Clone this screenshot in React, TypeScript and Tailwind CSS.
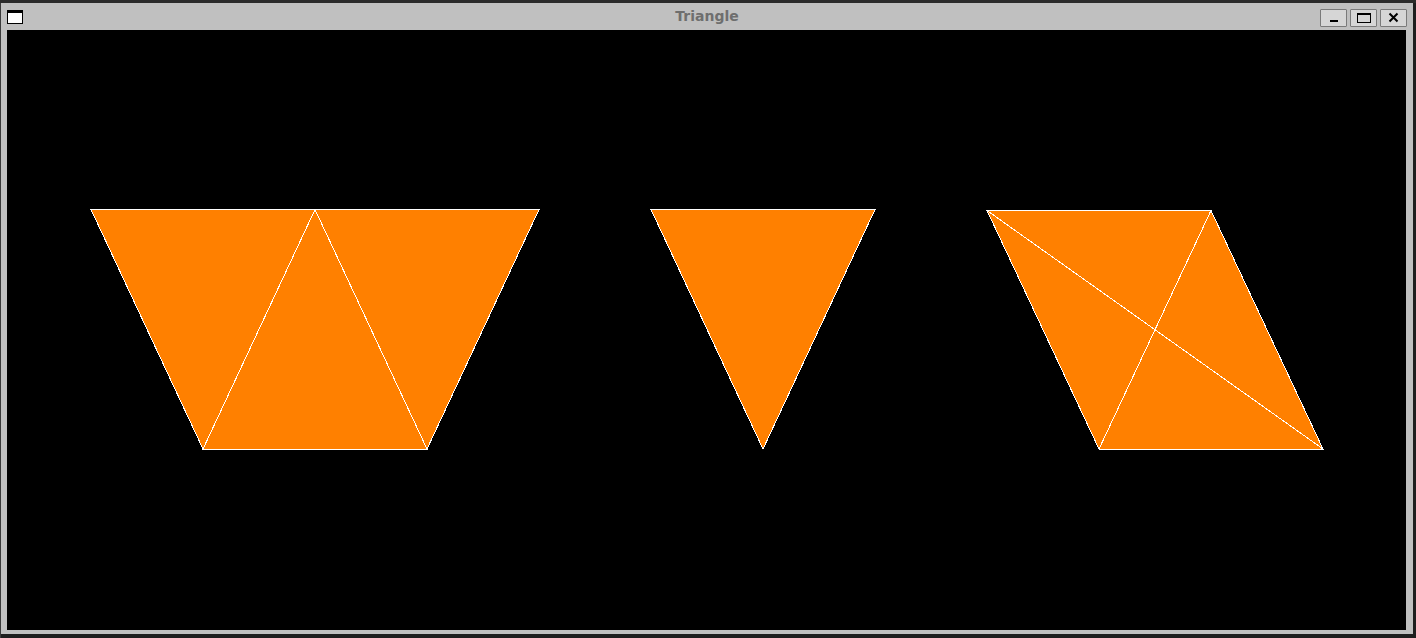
export default function App() {
  return (
    <div className="w-[1416px] h-[638px] bg-[#1e1e1e] flex flex-col overflow-hidden font-['DejaVu_Sans',sans-serif]">
      {/* browser strip peeking above the window */}
      <div className="h-[3px] bg-[#2b2b2b] shrink-0" />

      <div className="flex flex-1 min-h-0">
        <div className="w-px bg-[#3a3a3a]" />

        {/* Window */}
        <div className="w-[1412px] h-[631px] bg-[#c0c0c0] flex flex-col">
          {/* Title bar */}
          <div className="h-[27px] grid grid-cols-[1fr_auto_1fr] items-center pl-[6px] pr-[6px]">
            <div className="w-[16px] h-[14px] bg-white border border-black border-t-[3px] mt-[1px]" />
            <div className="text-center text-[14px] font-bold text-[#6e6e6e] leading-none -mt-[1px]">
              Triangle
            </div>
            <div className="flex gap-[3px] mt-[2px] justify-end">
              <button className="w-[27px] h-[18px] bg-[#d6d6d6] border border-[#7a7a7a] rounded-[1px] flex items-end justify-center pb-[4px]">
                <span className="block w-[8px] h-[2px] bg-black" />
              </button>
              <button className="w-[27px] h-[18px] bg-[#d6d6d6] border border-[#7a7a7a] rounded-[1px] flex items-center justify-center">
                <span className="block w-[14px] h-[10px] border border-black border-t-2" />
              </button>
              <button className="w-[27px] h-[18px] bg-[#d6d6d6] border border-[#7a7a7a] rounded-[1px] flex items-center justify-center">
                <svg width="11" height="11" viewBox="0 0 11 11">
                  <path d="M1.5 1.5 L9.5 9.5 M9.5 1.5 L1.5 9.5" stroke="black" strokeWidth="2" />
                </svg>
              </button>
            </div>
          </div>

          {/* Canvas */}
          <div className="ml-[6px] w-[1399px] h-[600px] bg-black">
            <svg width="1399" height="600" viewBox="0 0 1399 600" shapeRendering="crispEdges">
              <g transform="translate(-7,-30)" fill="#ff8000" stroke="#ffffff" strokeWidth="1">
                {/* trapezoid of three triangles */}
                <polygon points="91,209.5 315,209.5 203,449" />
                <polygon points="203,449 315,209.5 427,449" />
                <polygon points="315,209.5 539,209.5 427,449" />

                {/* single triangle */}
                <polygon points="651,209.5 875,209.5 763,449" />

                {/* parallelogram with diagonals */}
                <polygon points="987,210.5 1211,210.5 1323,449 1099,449" />
                <line x1="987" y1="210.5" x2="1323" y2="449" />
                <line x1="1211" y1="210.5" x2="1099" y2="449" />
              </g>
            </svg>
          </div>
        </div>
      </div>
    </div>
  )
}
